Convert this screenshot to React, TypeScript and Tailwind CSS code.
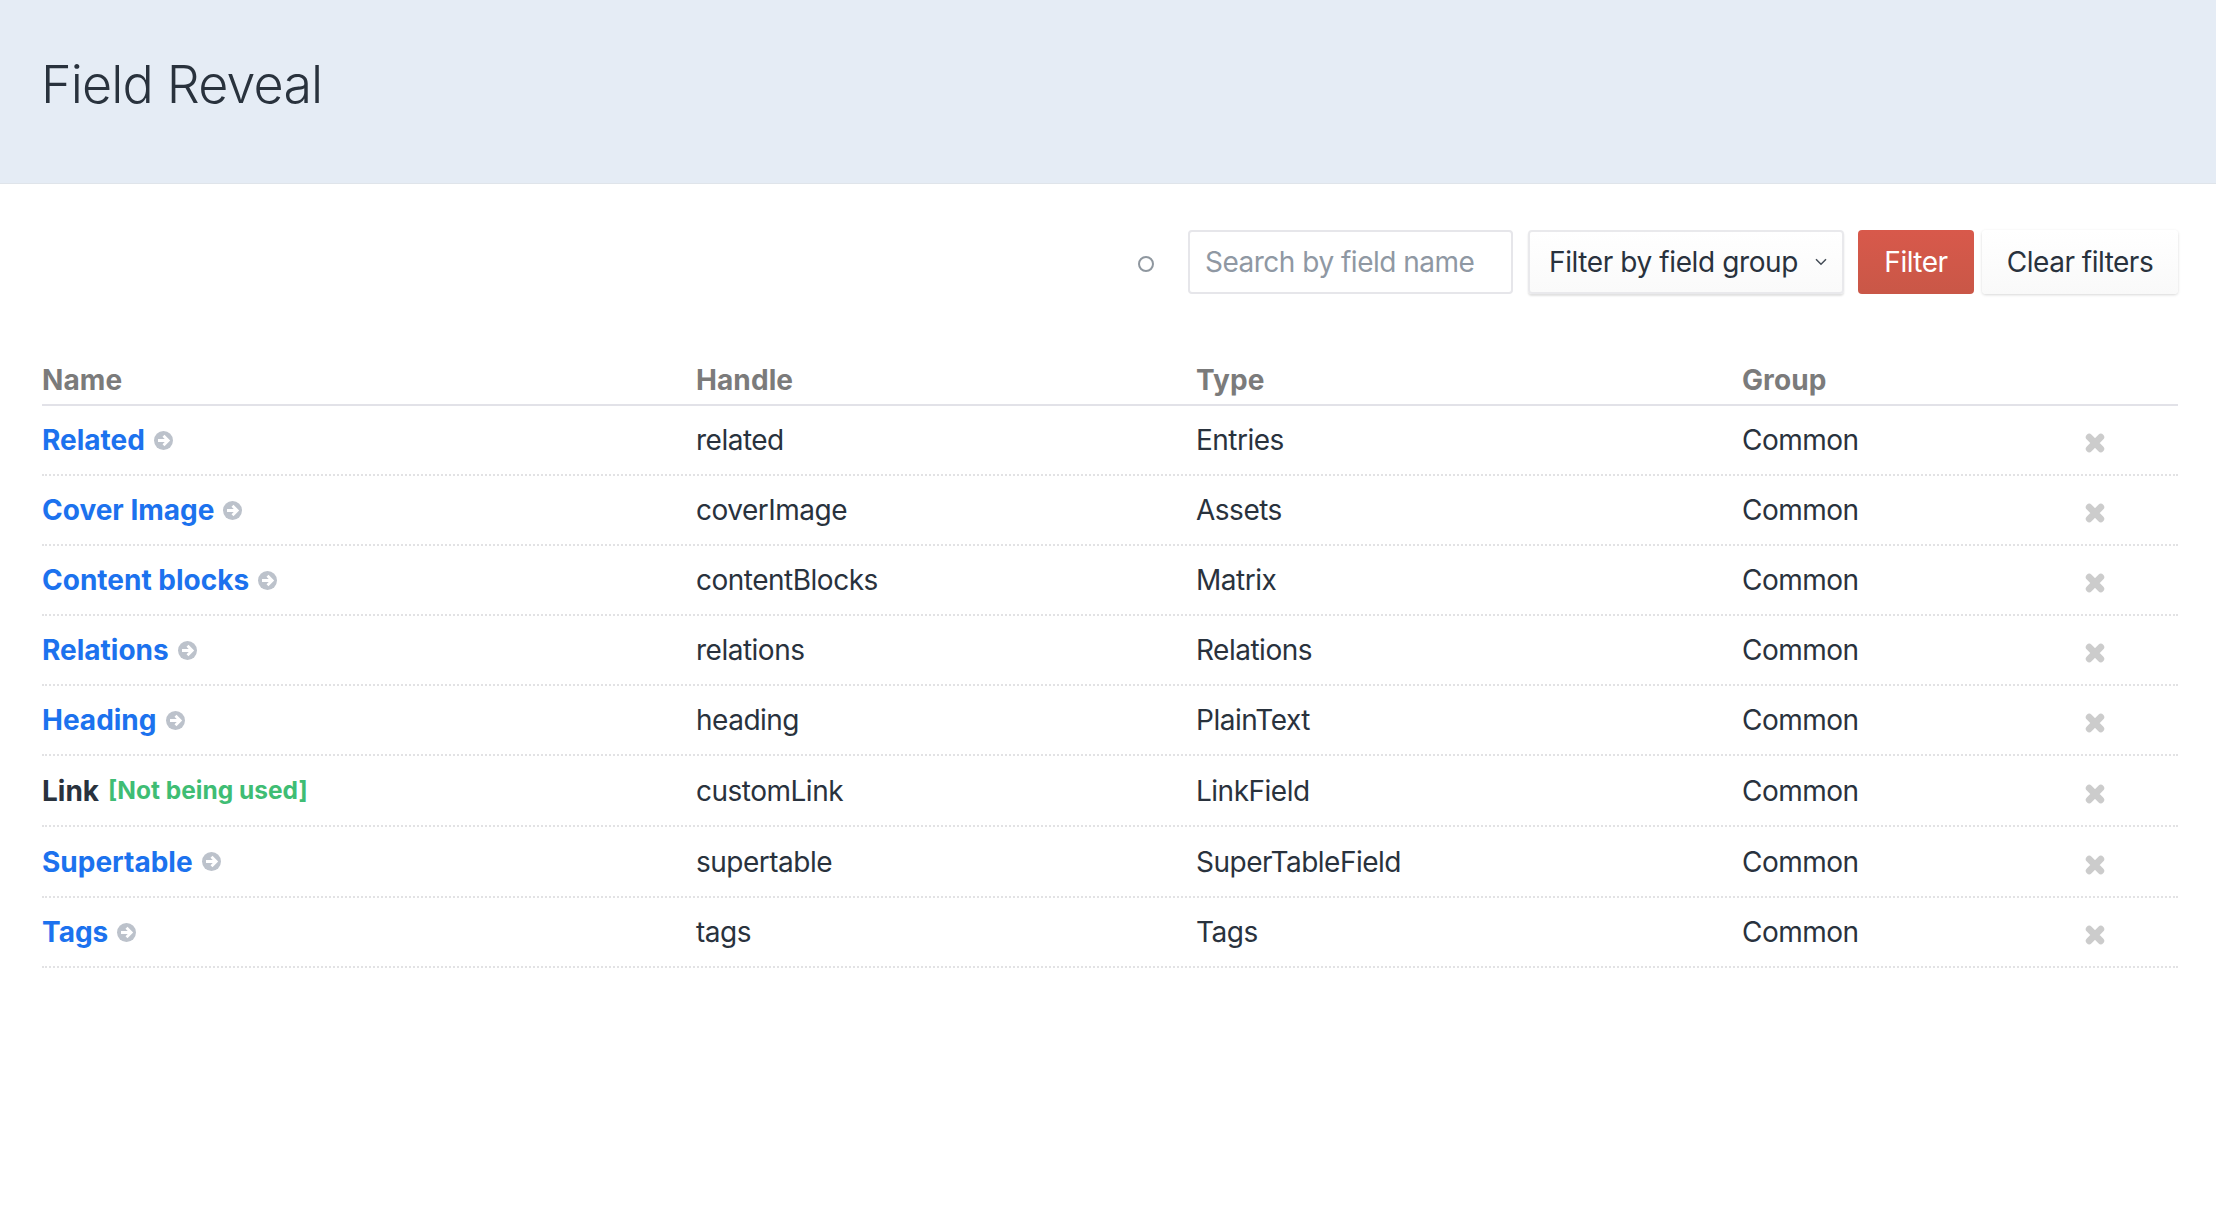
const fields = [
  { name: "Related", handle: "related", type: "Entries", rowClass: "h-[70px]" },
  { name: "Cover Image", handle: "coverImage", type: "Assets", rowClass: "h-[70px]" },
  { name: "Content blocks", handle: "contentBlocks", type: "Matrix", rowClass: "h-[70px]" },
  { name: "Relations", handle: "relations", type: "Relations", rowClass: "h-[70px]" },
  { name: "Heading", handle: "heading", type: "PlainText", rowClass: "h-[70px]" },
  { name: "Link", handle: "customLink", type: "LinkField", unused: true, rowClass: "h-[71px]" },
  { name: "Supertable", handle: "supertable", type: "SuperTableField", rowClass: "h-[71px]" },
  { name: "Tags", handle: "tags", type: "Tags", rowClass: "h-[70px]" },
];

function ArrowCircle() {
  return (
    <svg width="19" height="19" viewBox="0 0 19 19" className="shrink-0">
      <circle cx="9.5" cy="9.5" r="9.5" fill="#bcc2cb" />
      <path d="M4 9.5H13.5M9.5 4.8l4.7 4.7-4.7 4.7" fill="none" stroke="#fff" strokeWidth="2.8" />
    </svg>
  );
}

function Cross() {
  return (
    <svg width="20" height="20" viewBox="0 0 20 20" className="mt-[6px]">
      <path d="M4.2 4.2l11.6 11.6M15.8 4.2L4.2 15.8" stroke="#cccccc" strokeWidth="6.8" strokeLinecap="round" />
    </svg>
  );
}

export default function App() {
  return (
    <div className="min-h-[1212px] bg-white font-['Inter',sans-serif] text-[28px] tracking-[-0.5px] text-[#29323d]">
      <header className="h-[184px] border-b border-[#dfe4ea] bg-[#e5ecf5] pl-[41px] pt-[51px]">
        <h1 className="text-[52px] leading-[68px] font-light tracking-[-0.85px]">Field Reveal</h1>
      </header>

      <div className="flex h-[177px] items-start justify-end pr-[38px] pt-[46px]">
        <span className="mt-[26px] mr-[34px] h-[16px] w-[16px] rounded-full border-2 border-[#8f979f]" />
        <div className="flex h-[64px] w-[325px] items-center rounded-[4px] border-2 border-[#e6e6ea] bg-white pl-[15px] text-[#8f98a3]">
          Search by field name
        </div>
        <div className="ml-[15px] flex h-[64px] w-[316px] items-center justify-between rounded-[4px] border-2 border-[#e9e9ec] bg-gradient-to-b from-white to-[#fafafa] pl-[19px] pr-[15px] tracking-[-0.4px] shadow-[0_2px_2px_rgba(0,0,0,0.12)]">
          Filter by field group
          <svg width="12" height="8" viewBox="0 0 12 8">
            <path d="M1 1.2L6 6.2l5-5" fill="none" stroke="#444c56" strokeWidth="1.5" />
          </svg>
        </div>
        <div className="ml-[14px] flex h-[64px] w-[116px] items-center justify-center rounded-[4px] bg-gradient-to-b from-[#d8594b] to-[#c95747] text-white">
          Filter
        </div>
        <div className="ml-[8px] flex h-[64px] w-[196px] items-center justify-center rounded-[4px] bg-gradient-to-b from-white to-[#f9f9f9] shadow-[0_1px_3px_rgba(0,0,0,0.16)]">
          Clear filters
        </div>
      </div>

      <div className="ml-[42px] w-[2136px]">
        <div className="grid grid-cols-[654px_500px_546px_1fr] border-b-2 border-[#e2e2e8] pb-[6px] pt-[1px] leading-[36px] font-bold tracking-[0.1px] text-[#7b7b7b]">
          <div>Name</div>
          <div>Handle</div>
          <div>Type</div>
          <div>Group</div>
        </div>
        {fields.map((field) => (
          <div
            key={field.handle}
            className={`grid grid-cols-[654px_500px_546px_1fr] items-center border-b-2 border-dotted border-[#e2e2e4] ${field.rowClass}`}
          >
            {field.unused ? (
              <div className="flex items-center gap-[9px] font-bold tracking-normal">
                Link
                <span className="text-[24.5px] text-[#3fbd74]">[Not being used]</span>
              </div>
            ) : (
              <div className="flex items-center gap-[9px] font-bold tracking-normal text-[#1c72ee]">
                {field.name}
                <ArrowCircle />
              </div>
            )}
            <div>{field.handle}</div>
            <div>{field.type}</div>
            <div className="flex items-center justify-between pr-[73px]">
              Common
              <Cross />
            </div>
          </div>
        ))}
      </div>
    </div>
  );
}
